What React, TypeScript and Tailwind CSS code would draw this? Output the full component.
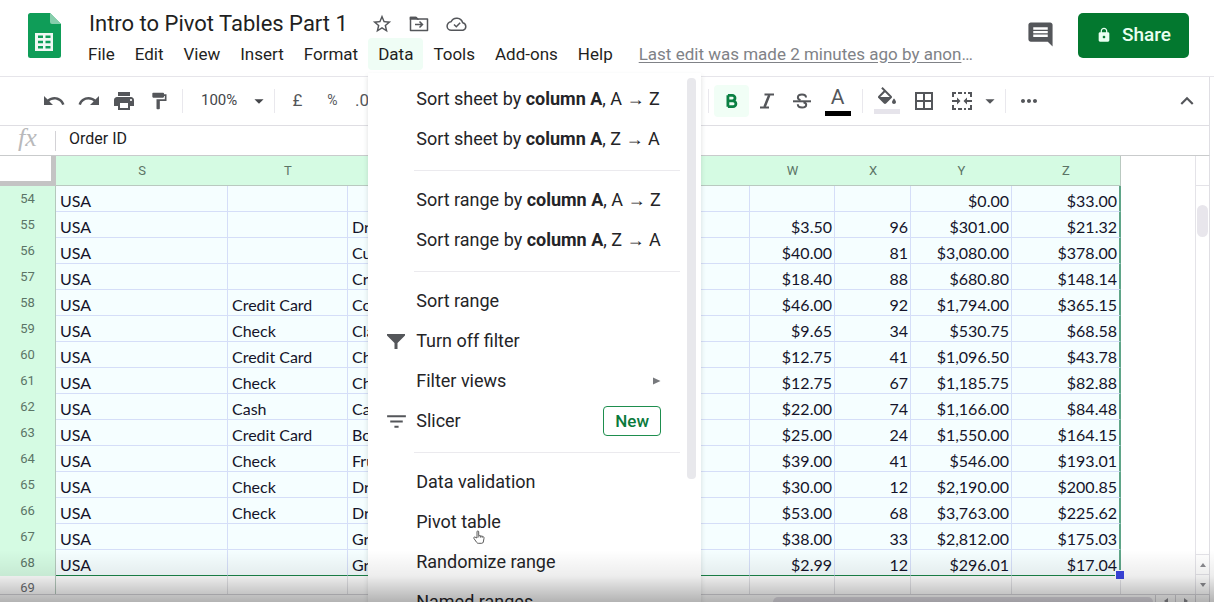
import React from "react";
import {
  MdArrowDropDown,
  MdBorderAll,
  MdComment,
  MdFilterList,
  MdFormatPaint,
  MdKeyboardArrowUp,
  MdLock,
  MdMoreHoriz,
  MdPrint,
  MdRedo,
  MdStarBorder,
  MdUndo,
} from "react-icons/md";

type Row = [number, string, string, string, string, string, string];

// Row number, payment type, product, W, X, Y, Z
const rows: Row[] = [
  [54, "", "", "", "", "$0.00", "$33.00"],
  [55, "", "Dr", "$3.50", "96", "$301.00", "$21.32"],
  [56, "", "Cu", "$40.00", "81", "$3,080.00", "$378.00"],
  [57, "", "Cra", "$18.40", "88", "$680.80", "$148.14"],
  [58, "Credit Card", "Co", "$46.00", "92", "$1,794.00", "$365.15"],
  [59, "Check", "Cla", "$9.65", "34", "$530.75", "$68.58"],
  [60, "Credit Card", "Ch", "$12.75", "41", "$1,096.50", "$43.78"],
  [61, "Check", "Ch", "$12.75", "67", "$1,185.75", "$82.88"],
  [62, "Cash", "Ca", "$22.00", "74", "$1,166.00", "$84.48"],
  [63, "Credit Card", "Bo", "$25.00", "24", "$1,550.00", "$164.15"],
  [64, "Check", "Fru", "$39.00", "41", "$546.00", "$193.01"],
  [65, "Check", "Dr", "$30.00", "12", "$2,190.00", "$200.85"],
  [66, "Check", "Dr", "$53.00", "68", "$3,763.00", "$225.62"],
  [67, "", "Gr", "$38.00", "33", "$2,812.00", "$175.03"],
  [68, "", "Gr", "$2.99", "12", "$296.01", "$17.04"],
];

function SheetsLogo() {
  return (
    <svg viewBox="0 0 33 45" className="h-[45px] w-[33px] shrink-0" aria-hidden="true">
      <path d="M2.500 0H22l11 11v31.500a2.500 2.500 0 0 1-2.500 2.500h-28A2.500 2.500 0 0 1 0 42.500v-40A2.500 2.500 0 0 1 2.500 0z" fill="#0f9d58" />
      <path d="M22 0l11 11H24a2 2 0 0 1-2-2z" fill="#87ceac" />
      <path
        fillRule="evenodd"
        fill="#f1f8f4"
        d="M7 20h18v18H7zM10 22.500h5v2.500h-5zM17.500 22.500h5v2.500h-5zM10 27.800h5v2.500h-5zM17.500 27.800h5v2.500h-5zM10 33h5v2.500h-5zM17.500 33h5v2.500h-5z"
      />
    </svg>
  );
}

function MoveIcon() {
  return (
    <svg viewBox="0 0 20 16" className="h-4 w-5" fill="none" stroke="currentColor" strokeWidth="1.500" aria-hidden="true">
      <path d="M1.500 1.500h5.500l1.500 1.500h10v11.500h-17z" strokeLinejoin="round" />
      <path d="M1.500 1.500h5.500l1.500 1.500h-7z" fill="currentColor" />
      <path d="M6 8.500h7M10.500 5.500l3 3-3 3" />
    </svg>
  );
}

function CloudIcon() {
  return (
    <svg viewBox="0 0 22 16" className="h-4 w-[22px]" fill="none" stroke="currentColor" strokeWidth="1.500" aria-hidden="true">
      <path d="M5.500 14.200a4.200 4.200 0 0 1-.4-8.400 6.200 6.200 0 0 1 11.600 1 3.800 3.800 0 0 1 .3 7.400z" strokeLinejoin="round" />
      <path d="M8 8.500l2.300 2.200 3.900-3.900" />
    </svg>
  );
}

function BoldIcon() {
  return (
    <svg viewBox="0 0 14 16" className="h-4 w-[14px]" fill="none" stroke="currentColor" strokeWidth="2.800" aria-hidden="true">
      <path d="M2.900 2.200v11.600M2.900 2.400H7.300a2.700 2.700 0 0 1 0 5.400H2.900M7.300 7.800h.7a2.900 2.900 0 0 1 0 5.800H2.900" />
    </svg>
  );
}

function ItalicIcon() {
  return (
    <svg viewBox="0 0 16 16" className="h-4 w-4" fill="none" stroke="currentColor" aria-hidden="true">
      <path d="M5.500 1.500H15M1 14.500h9" strokeWidth="2" />
      <path d="M10.300 2L5.500 14" strokeWidth="2.500" />
    </svg>
  );
}

function StrikeIcon() {
  return (
    <svg viewBox="0 0 18 16" className="h-4 w-[18px]" fill="none" stroke="currentColor" strokeWidth="2" aria-hidden="true">
      <path d="M0 8.300h18" />
      <path d="M13 4.600C13 2.800 11.400 1.500 9 1.500S4.900 2.700 4.900 4.400c0 1.400.9 2.200 2.600 2.800M10.500 9.300c1.700.5 2.700 1 2.700 2.400 0 1.700-1.600 2.800-4.100 2.800s-4.300-1.200-4.300-3.200" />
    </svg>
  );
}

function MergeIcon() {
  return (
    <svg viewBox="0 0 22 20" className="h-5 w-[22px]" fill="none" stroke="currentColor" strokeWidth="2" aria-hidden="true">
      <path d="M2 6V2h3M7 2h4M13 2h2M17 2h3v4M2 14v4h3M7 18h4M13 18h2M17 18h3v-4" />
      <path d="M1 10h6M21 10h-6" />
      <path d="M6 6.500L9.500 10 6 13.500zM16 6.500L12.500 10l3.500 3.500z" fill="currentColor" stroke="none" />
    </svg>
  );
}

function FillIcon() {
  return (
    <svg viewBox="0 0 24 18" className="h-[18px] w-6" fill="currentColor" aria-hidden="true">
      <path d="M16.560 8.940L7.620 0 6.210 1.410l2.380 2.380-5.150 5.150c-.59.59-.59 1.540 0 2.120l5.500 5.500c.29.29.68.44 1.060.44s.77-.15 1.060-.44l5.500-5.500c.59-.58.59-1.530 0-2.120zM5.210 10L10 5.210 14.790 10H5.210zM19 11.500s-2 2.170-2 3.500c0 1.100.9 2 2 2s2-.9 2-2c0-1.330-2-3.500-2-3.500z" />
    </svg>
  );
}

function FunnelIcon() {
  return (
    <svg viewBox="0 0 18 15" className="h-[15px] w-[18px]" fill="currentColor" aria-hidden="true">
      <path d="M0 0h18v1.500L10.500 9v6H7.500V9L0 1.500z" />
    </svg>
  );
}

function HandCursor() {
  return (
    <svg viewBox="0 0 12 14" className="pointer-events-none absolute left-[105px] top-[28px] h-[14px] w-3" aria-hidden="true">
      <path
        d="M4 8V1.800C4 .6 5.700.6 5.700 1.800V5.500l4 .9c1 .2 1.500.9 1.300 1.900L10.300 12c-.2.9-.8 1.300-1.600 1.300H5.300c-.7 0-1.200-.3-1.600-.9L.9 8.400C.3 7.500 1.300 6.700 2.100 7.200z"
        fill="#ffffff"
        stroke="#4a4a4a"
        strokeWidth="0.900"
      />
      <path d="M5.700 5.500v2M7.500 6v1.700M9.200 6.400V8" stroke="#4a4a4a" strokeWidth="0.700" />
    </svg>
  );
}

function Tool({ label, children, active }: { label: string; children: React.ReactNode; active?: boolean }) {
  return (
    <button
      type="button"
      aria-label={label}
      className={
        active
          ? "flex h-8 w-[35px] shrink-0 items-center justify-center rounded-sm bg-[#f1fef6] text-[#0b8043]"
          : "flex h-8 w-[35px] shrink-0 items-center justify-center text-[#54565a]"
      }
    >
      {children}
    </button>
  );
}

function Divider() {
  return <div className="h-6 w-px shrink-0 bg-[#e9e8ed]" />;
}

function MenuItem({
  children,
  icon,
  trailing,
}: {
  children: React.ReactNode;
  icon?: React.ReactNode;
  trailing?: React.ReactNode;
}) {
  return (
    <button type="button" role="menuitem" className="relative flex h-10 w-full items-center pr-[40px] text-left">
      <span className="flex w-[48px] shrink-0 justify-center pl-2 text-[#54565a]">{icon}</span>
      <span className="flex-1 whitespace-nowrap">{children}</span>
      {trailing}
    </button>
  );
}

function Separator() {
  return <div className="mb-[9px] ml-[46px] mr-[21px] mt-[11px] h-px bg-[#ebeaee]" />;
}

function DataMenu() {
  return (
    <div
      role="menu"
      className="absolute left-0 top-[35px] z-20 h-[calc(100vh-73px)] w-[333px] overflow-hidden bg-white pt-[6px] text-[18px] leading-5 text-[#242427] shadow-[0_3px_5px_rgba(60,64,67,0.18)]"
    >
      <MenuItem>Sort sheet by <b>column A</b>, A → Z</MenuItem>
      <MenuItem>Sort sheet by <b>column A</b>, Z → A</MenuItem>
      <Separator />
      <MenuItem>Sort range by <b>column A</b>, A → Z</MenuItem>
      <MenuItem>Sort range by <b>column A</b>, Z → A</MenuItem>
      <Separator />
      <MenuItem>Sort range</MenuItem>
      <MenuItem icon={<FunnelIcon />}>Turn off filter</MenuItem>
      <MenuItem
        trailing={
          <svg viewBox="0 0 8 8" className="h-2 w-2" fill="#77797d" aria-hidden="true">
            <path d="M0 0.500l7.500 3.500L0 7.500z" />
          </svg>
        }
      >
        Filter views
      </MenuItem>
      <MenuItem
        icon={<MdFilterList size={25} />}
        trailing={
          <span className="flex h-[30px] w-[58px] items-center justify-center rounded border border-[#1e8e4e] text-[17px] font-medium text-[#0b7a3b]">
            New
          </span>
        }
      >
        Slicer
      </MenuItem>
      <Separator />
      <MenuItem>Data validation</MenuItem>
      <MenuItem trailing={<HandCursor />}>Pivot table</MenuItem>
      <MenuItem>Randomize range</MenuItem>
      <MenuItem>Named ranges</MenuItem>
      <div className="absolute right-[5px] top-[5px] h-[401px] w-[9px] rounded bg-[#e8e8ec]" />
    </div>
  );
}

function Header() {
  const link = "px-[10px] h-8";
  return (
    <header className="flex h-[77px] shrink-0 border-b border-[#e6e5ea] pl-7 pt-[13px]">
      <SheetsLogo />
      <div className="flex min-w-0 flex-1 flex-col pl-[17px]">
        <div className="flex h-[22px] items-center pl-[11px] text-[#54565a]">
          <h1 className="whitespace-nowrap text-[22px] leading-[22px] text-[#1f1f22]">Intro to Pivot Tables Part 1</h1>
          <button type="button" aria-label="Star" className="ml-[23px]"><MdStarBorder size={22} /></button>
          <button type="button" aria-label="Move" className="ml-4"><MoveIcon /></button>
          <button type="button" aria-label="Saved to Drive" className="ml-[17px]"><CloudIcon /></button>
        </div>
        <nav className="mt-[3px] flex h-8 items-center whitespace-nowrap text-[17px] leading-5 text-[#1f1f22]">
          <button type="button" className={link}>File</button>
          <button type="button" className={link}>Edit</button>
          <button type="button" className={link}>View</button>
          <button type="button" className={link}>Insert</button>
          <button type="button" className={link}>Format</button>
          <div className="relative">
            <button type="button" aria-haspopup="menu" aria-expanded="true" className="h-8 rounded-sm bg-[#effdf5] px-[10px]">
              Data
            </button>
            <DataMenu />
          </div>
          <button type="button" className={link}>Tools</button>
          <button type="button" className={link}>Add-ons</button>
          <button type="button" className={link}>Help</button>
          <a href="#history" className="ml-4 text-[#808287]">
            <span className="underline underline-offset-2">Last edit was made 2 minutes ago by anon</span>…
          </a>
        </nav>
      </div>
      <button type="button" aria-label="Comments" className="mr-[23px] flex h-[43px] items-center text-[#54565a]">
        <MdComment size={29} />
      </button>
      <button
        type="button"
        className="mr-[25px] flex h-[45px] w-[111px] shrink-0 items-center justify-center gap-[10px] rounded-[5px] bg-[#03782f] pb-[2px] text-[19px] font-medium leading-5 text-[#e9fff1]"
      >
        <MdLock size={16} />
        Share
      </button>
    </header>
  );
}

function Toolbar() {
  return (
    <div className="mr-1 flex h-[49px] shrink-0 items-center border-b border-r border-[#dfdee3] pb-[1px] pl-[36px] text-[15px] text-[#44464a]">
      <Tool label="Undo"><MdUndo size={24} /></Tool>
      <Tool label="Redo"><MdRedo size={24} /></Tool>
      <Tool label="Print"><MdPrint size={24} /></Tool>
      <Tool label="Paint format"><MdFormatPaint size={20} /></Tool>
      <div className="w-[6px]" />
      <Divider />
      <button type="button" aria-label="Zoom" className="flex h-8 w-[91px] items-center justify-between pl-[18px] pr-1">
        100%
        <MdArrowDropDown size={22} />
      </button>
      <Divider />
      <div className="w-[5px]" />
      <Tool label="Currency"><span className="text-[17px]">£</span></Tool>
      <Tool label="Percent"><span className="text-[14px]">%</span></Tool>
      <button type="button" aria-label="Decrease decimals" className="h-8 w-9 shrink-0 pl-[5px] text-left text-[17px] text-[#54565a]">.0</button>
      <div className="w-[322px] shrink-0" />
      <Divider />
      <div className="w-[5px]" />
      <Tool label="Bold" active><BoldIcon /></Tool>
      <Tool label="Italic"><ItalicIcon /></Tool>
      <Tool label="Strikethrough"><StrikeIcon /></Tool>
      <Tool label="Text color">
        <span className="flex flex-col items-center gap-[3px] pl-[2px]">
          <span className="text-[21px] leading-[22px]">A</span>
          <span className="h-[5px] w-[26px] bg-black" />
        </span>
      </Tool>
      <div className="w-[8px]" />
      <Divider />
      <div className="w-[6px]" />
      <Tool label="Fill color">
        <span className="flex flex-col items-center gap-[4px]">
          <FillIcon />
          <span className="h-[5px] w-[26px] bg-[#e6e4eb]" />
        </span>
      </Tool>
      <div className="w-[2px]" />
      <Tool label="Borders"><MdBorderAll size={24} /></Tool>
      <div className="w-[3px]" />
      <Tool label="Merge cells"><MergeIcon /></Tool>
      <button type="button" aria-label="Merge options" className="flex h-8 w-[22px] items-center justify-center text-[#54565a]">
        <MdArrowDropDown size={22} />
      </button>
      <div className="w-[4px]" />
      <Divider />
      <div className="w-[5px]" />
      <Tool label="More"><MdMoreHoriz size={24} /></Tool>
      <div className="flex-1" />
      <Tool label="Hide the menus"><MdKeyboardArrowUp size={26} /></Tool>
      <div className="w-[5px]" />
    </div>
  );
}

function Sheet() {
  const head = "h-[30px] border-b border-[#b9c9c0] bg-[#d5fbe3] text-[13px] font-normal leading-5 text-[#5b7466]";
  const cell = "h-[26px] whitespace-nowrap border-b border-r border-[#d5def8] bg-[#f5feff] p-0 align-bottom leading-5 text-[#14142a]";
  const text = cell + " pl-1";
  const num = cell + " pr-[2px] text-right";
  const rowHead = "border-r border-[#b4c8bc] p-0 text-center text-[13px] font-normal [font-family:Roboto,sans-serif]";
  const empty = "border-r border-[#e2e2e6] p-0";
  return (
    <table className="w-[1121px] shrink-0 table-fixed border-separate border-spacing-0 self-start text-[16px] [font-family:Lato,sans-serif]">
      <colgroup>
        <col className="w-[56px]" />
        <col className="w-[172px]" />
        <col className="w-[120px]" />
        <col className="w-[200px]" />
        <col className="w-[202px]" />
        <col className="w-[85px]" />
        <col className="w-[76px]" />
        <col className="w-[101px]" />
        <col className="w-[109px]" />
      </colgroup>
      <thead className="[font-family:Roboto,sans-serif]">
        <tr>
          <td className="h-[30px] border-b-[5px] border-r-[5px] border-[#c4c4c4] bg-white p-0" />
          <th className={head}>S</th>
          <th className={head}>T</th>
          <th className={head}>U</th>
          <th className={head}>V</th>
          <th className={head}>W</th>
          <th className={head}>X</th>
          <th className={head}>Y</th>
          <th className={head + " border-r"}>Z</th>
        </tr>
      </thead>
      <tbody>
        {rows.map(([n, pay, item, w, x, y, z], i) => {
          const last = i === rows.length - 1 ? " border-b-[#1b8449]" : "";
          return (
            <tr key={n}>
              <th scope="row" className={rowHead + " h-[26px] bg-[#d5fbe3] leading-5 text-[#5b7466]"}>{n}</th>
              <td className={text + last}>USA</td>
              <td className={text + last}>{pay}</td>
              <td className={text + last}>{item}</td>
              <td className={text + last} />
              <td className={num + last}>{w}</td>
              <td className={num + last}>{x}</td>
              <td className={num + last}>{y}</td>
              <td className={num + last + " border-r-2 border-r-[#5fa588]"}>{z}</td>
            </tr>
          );
        })}
        <tr>
          <th scope="row" className={rowHead + " h-[18px] align-bottom leading-3 text-[#6b6d70]"}>69</th>
          <td className={empty} />
          <td className={empty} />
          <td className={empty} />
          <td className={empty} />
          <td className={empty} />
          <td className={empty} />
          <td className={empty} />
          <td className={empty + " relative"}>
            <span className="absolute -right-1 -top-[5px] h-2 w-2 bg-[#3b45e0] outline outline-1 outline-white" />
          </td>
        </tr>
      </tbody>
    </table>
  );
}

function Arrow({ d }: { d: string }) {
  return (
    <svg viewBox="0 0 6 6" className="h-[6px] w-[6px]" fill="#8b8b90" aria-hidden="true">
      <path d={d} />
    </svg>
  );
}

export default function App() {
  return (
    <div className="relative flex h-screen flex-col overflow-hidden bg-white [font-family:Roboto,sans-serif]">
      <Header />
      <Toolbar />
      <div className="mr-1 flex h-[30px] shrink-0 items-center border-b border-r border-[#c9cbcc] border-r-[#dfdee3]">
        <span className="w-[55px] pb-[5px] text-center text-[26px] italic leading-6 text-[#b9b9bb] [font-family:'Liberation_Serif',serif]">fx</span>
        <div className="h-5 w-px bg-[#d3d2d6]" />
        <input
          aria-label="Formula"
          defaultValue="Order ID"
          className="mb-[3px] min-w-0 flex-1 pl-[13px] text-[16px] leading-5 text-[#1c1c1e] outline-none"
        />
      </div>
      <div className="mr-1 flex min-h-0 flex-1 border-r border-[#dfdee3]">
        <div className="flex min-w-0 flex-1 overflow-hidden">
          <Sheet />
        </div>
        <div className="flex w-[14px] shrink-0 flex-col border-l border-[#e4e3e8]">
          <div className="h-[30px] shrink-0 border-b border-[#e4e3e8]" />
          <div className="flex-1 px-[1px] pt-[19px]">
            <div className="h-8 rounded-full bg-[#e8e6ec]" />
          </div>
          <div className="flex h-5 shrink-0 items-center justify-center border-t border-[#e4e3e8]"><Arrow d="M0 5l3-4 3 4z" /></div>
          <div className="flex h-5 shrink-0 items-center justify-center border-t border-[#e4e3e8]"><Arrow d="M0 1l3 4 3-4z" /></div>
        </div>
      </div>
      <div className="mr-1 flex h-2 shrink-0 overflow-hidden border-r border-t border-[#d6d5da] bg-white">
        <div className="flex flex-1 justify-end pr-[2px] pt-[2px]">
          <div className="h-3 w-[380px] rounded-t-[5px] bg-[#e2dfe6]" />
        </div>
        <div className="flex h-4 w-5 items-start justify-center border-l border-[#d6d5da] pt-[3px]"><Arrow d="M5 0L1 3l4 3z" /></div>
        <div className="flex h-4 w-5 items-start justify-center border-l border-[#d6d5da] pt-[3px]"><Arrow d="M1 0l4 3-4 3z" /></div>
        <div className="w-[14px] border-l border-[#d6d5da]" />
      </div>
      <div className="pointer-events-none absolute inset-x-0 bottom-0 z-30 h-[52px] bg-linear-to-b from-transparent via-black/7 to-black/30" />
    </div>
  );
}
